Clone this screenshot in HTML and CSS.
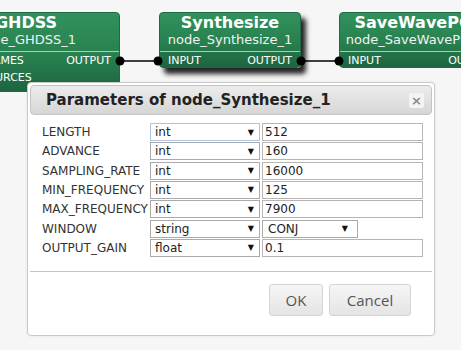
FILE: index.html
```html
<!DOCTYPE html>
<html lang="en">
<head>
  <meta charset="UTF-8">
  <title>Parameters of node_Synthesize_1</title>
  <link rel="stylesheet" href="styles.css">
</head>
<body>
  <div class="canvas">
    <div class="node node-ghdss">
      <div class="node-title">GHDSS</div>
      <div class="node-name">node_GHDSS_1</div>
      <div class="ports">
        <div class="port-row"><span>INPUT_FRAMES</span><span>OUTPUT</span></div>
        <div class="port-row"><span>INPUT_SOURCES</span></div>
      </div>
    </div>
    <div class="node node-synth">
      <div class="node-title">Synthesize</div>
      <div class="node-name">node_Synthesize_1</div>
      <div class="ports">
        <div class="port-row"><span>INPUT</span><span>OUTPUT</span></div>
      </div>
    </div>
    <div class="node node-save">
      <div class="node-title">SaveWavePCM</div>
      <div class="node-name">node_SaveWavePCM_1</div>
      <div class="ports">
        <div class="port-row"><span>INPUT</span><span>OUTPUT</span></div>
      </div>
    </div>

    <svg class="wires" width="461" height="80" viewBox="0 0 461 80">
      <line x1="120" y1="61" x2="158" y2="61" stroke="#000" stroke-width="1.5"/>
      <line x1="301" y1="61" x2="339" y2="61" stroke="#000" stroke-width="1.5"/>
      <circle cx="120" cy="61" r="4.5" fill="#000"/>
      <circle cx="158" cy="61" r="4.5" fill="#000"/>
      <circle cx="301" cy="61" r="4.5" fill="#000"/>
      <circle cx="339" cy="61" r="4.5" fill="#000"/>
    </svg>

    <div class="dialog">
      <div class="dialog-title">
        <span>Parameters of node_Synthesize_1</span>
        <span class="close">&times;</span>
      </div>
      <div class="params">
        <label>LENGTH</label>
        <div class="sel focus"><span>int</span><i>&#9660;</i></div>
        <div class="txt">512</div>

        <label>ADVANCE</label>
        <div class="sel"><span>int</span><i>&#9660;</i></div>
        <div class="txt">160</div>

        <label>SAMPLING_RATE</label>
        <div class="sel"><span>int</span><i>&#9660;</i></div>
        <div class="txt">16000</div>

        <label>MIN_FREQUENCY</label>
        <div class="sel"><span>int</span><i>&#9660;</i></div>
        <div class="txt">125</div>

        <label>MAX_FREQUENCY</label>
        <div class="sel"><span>int</span><i>&#9660;</i></div>
        <div class="txt">7900</div>

        <label>WINDOW</label>
        <div class="sel"><span>string</span><i>&#9660;</i></div>
        <div class="sel small"><span>CONJ</span><i>&#9660;</i></div>

        <label>OUTPUT_GAIN</label>
        <div class="sel"><span>float</span><i>&#9660;</i></div>
        <div class="txt">0.1</div>
      </div>
      <div class="buttons">
        <button class="btn ok">OK</button>
        <button class="btn cancel">Cancel</button>
      </div>
    </div>
  </div>
</body>
</html>
```

FILE: styles.css
```css
* {
  margin: 0;
  padding: 0;
  box-sizing: border-box;
}
body {
  background-color: #f6f6f6;
  font-family: 'DejaVu Sans', Verdana, sans-serif;
  overflow: hidden;
}
.canvas {
  position: relative;
  width: 461px;
  height: 350px;
  overflow: hidden;
}

/* graph nodes */
.node {
  position: absolute;
  top: 12px;
  border-radius: 4px;
  color: #fff;
  text-align: center;
  background: linear-gradient(to bottom, #31925d 0%, #28804f 55%, #1d6541 100%);
  border: 1px solid #1f6a44;
}
.node-ghdss {
  left: -68px;
  width: 188px;
  height: 80px;
}
.node-synth {
  left: 159px;
  width: 142px;
  height: 56px;
  box-shadow: 5px 6px 5px rgba(0,0,0,0.85);
}
.node-save {
  left: 339px;
  width: 163px;
  height: 56px;
}
.node-title {
  font-size: 16px;
  font-weight: bold;
  line-height: 19px;
}
.node-name {
  font-size: 13px;
  line-height: 16px;
  color: #f2f2f2;
  padding-bottom: 3px;
}
.ports {
  border-top: 1px solid #a9cdb8;
}
.port-row {
  display: flex;
  justify-content: space-between;
  font-size: 11px;
  line-height: 15px;
  padding: 1px 8px 0 8px;
}
.node-ghdss .port-row + .port-row {
  padding-top: 2px;
}
.wires {
  position: absolute;
  left: 0;
  top: 0;
}

/* dialog */
.dialog {
  position: absolute;
  left: 27px;
  top: 82px;
  width: 408px;
  height: 254px;
  background-color: #fff;
  border: 1px solid #c9c9c9;
  border-radius: 4px;
  padding: 2px;
  box-shadow: 0 0 3px rgba(0,0,0,0.08);
}
.dialog-title {
  height: 30px;
  display: flex;
  align-items: center;
  justify-content: space-between;
  padding: 0 7px 0 15px;
  border: 1px solid #c4c4c4;
  border-radius: 4px;
  background: linear-gradient(to bottom, #ececec, #d6d6d6);
  font-size: 15px;
  font-weight: bold;
  color: #222;
}
.close {
  width: 15px;
  height: 15px;
  display: flex;
  align-items: center;
  justify-content: center;
  background-color: #f4f4f4;
  border-radius: 2px;
  font-size: 13px;
  color: #8a8a8a;
  line-height: 1;
}
.params {
  display: grid;
  grid-template-columns: 108px 112px 161px;
  grid-auto-rows: 18px;
  row-gap: 1.33px;
  align-items: center;
  padding: 8px 0 0 12px;
  font-size: 12px;
  color: #333;
}
.params label {
  white-space: nowrap;
}
.sel {
  width: 110px;
  height: 18px;
  border: 1px solid #aaa;
  background-color: #fff;
  display: flex;
  align-items: center;
  justify-content: space-between;
  padding: 0 5px 0 4px;
  color: #222;
}
.sel.focus {
  border-color: #a9c3e2;
}
.sel i {
  font-style: normal;
  font-size: 8px;
  color: #111;
}
.sel.small {
  width: 96px;
  padding-right: 9px;
  padding-left: 5px;
}
.txt {
  height: 18px;
  border: 1px solid #b5b5b5;
  padding: 0 2px;
  line-height: 16px;
  color: #222;
}
.buttons {
  margin-top: 14px;
  border-top: 1px solid #c4c4c4;
  display: flex;
  justify-content: flex-end;
  gap: 6px;
  padding: 12px 21px 0 0;
}
.btn {
  height: 32px;
  border: 1px solid #d4d4d4;
  border-radius: 3px;
  background: linear-gradient(to bottom, #f6f6f6, #e4e4e4);
  font-family: 'Open Sans', sans-serif;
  font-size: 15px;
  color: #555;
}
.ok {
  width: 54px;
}
.cancel {
  width: 82px;
}
```
